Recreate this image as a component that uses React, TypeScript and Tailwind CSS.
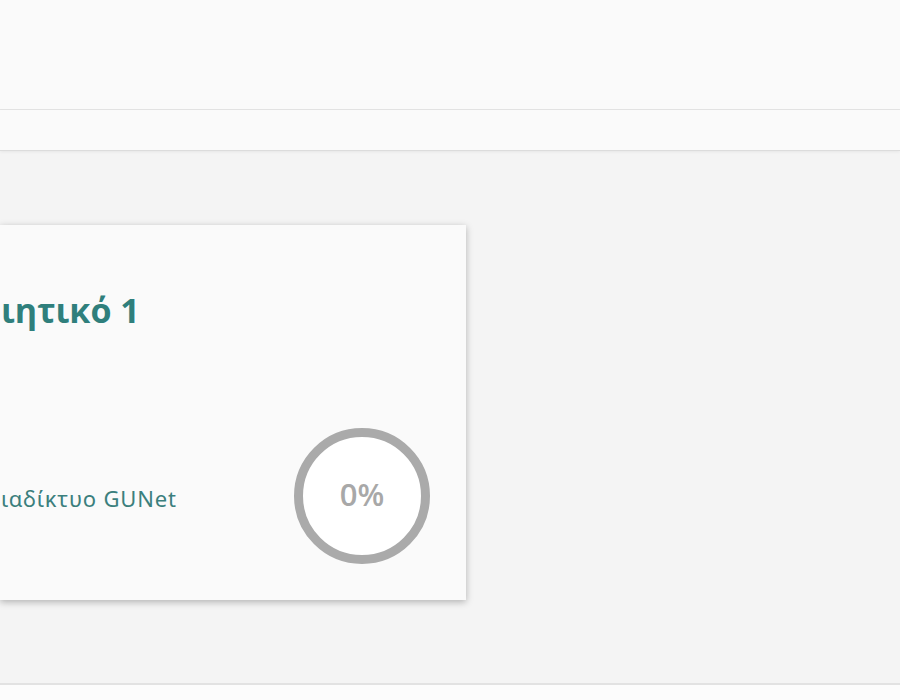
export default function App() {
  return (
    <div className="h-[700px] w-[900px] overflow-hidden flex flex-col bg-[#f4f4f4]" style={{ fontFamily: '"Open Sans", "Noto Sans", sans-serif' }}>
      <div className="h-[110px] shrink-0 bg-[#fafafa] border-b border-[#e4e4e4]" />
      <div className="h-[41px] shrink-0 bg-[#fafafa] border-b border-[#dcdcdc] shadow-[0_1px_3px_rgba(0,0,0,0.06)]" />
      <div className="flex-1 pt-[74px]">
        <div className="relative h-[375px] w-[466px] bg-[#fafafa] shadow-[0_2px_7px_rgba(0,0,0,0.28)] overflow-hidden">
          <div className="absolute left-[1px] top-[68px] text-[34px] font-bold text-[#2f7f7c] leading-none whitespace-nowrap">ιητικό 1</div>
          <div className="absolute left-[1px] top-[262px] text-[22px] text-[#3b7f7d] leading-none whitespace-nowrap tracking-[0.8px]" style={{ fontFamily: '"Noto Sans", sans-serif' }}>ιαδίκτυο GUNet</div>
          <div className="absolute left-[294px] top-[203px] w-[136px] h-[136px] rounded-full border-[9px] border-[#aaaaaa] bg-white flex items-center justify-center pb-[3px]">
            <span className="text-[31px] font-semibold text-[#a8a8a8] leading-none">0%</span>
          </div>
        </div>
      </div>
      <div className="h-[17px] shrink-0 bg-[#fcfcfc] border-t-2 border-[#e2e2e2]" />
    </div>
  );
}
